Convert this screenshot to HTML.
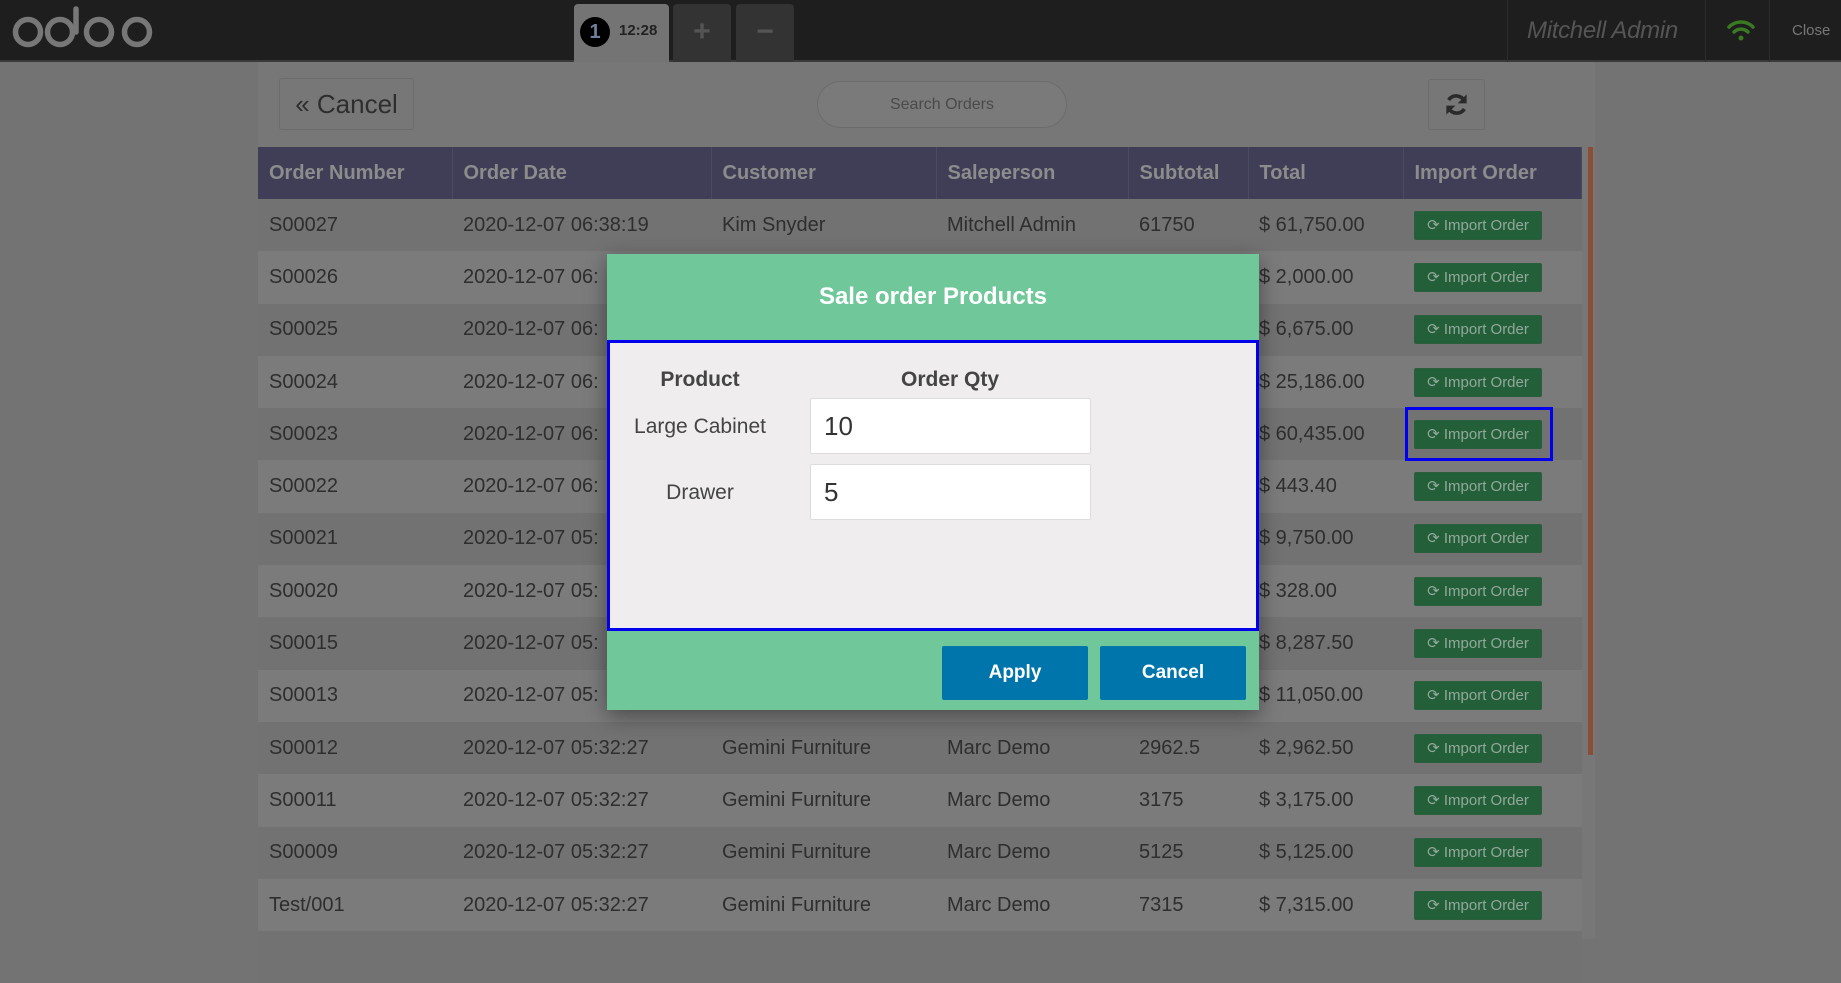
<!DOCTYPE html>
<html><head><meta charset="utf-8"><style>
*{box-sizing:border-box;margin:0;padding:0}
body{width:1841px;height:939px;overflow:hidden;background:#737373;font-family:"Liberation Sans",sans-serif;position:relative}
.abs{position:absolute}
.top{left:0;top:0;width:1841px;height:62px;background:#1e1e1e;border-bottom:2px solid #3a3a3a}
.panel{left:258px;top:62px;width:1337px;height:877px;background:#777}
table{position:absolute;left:258px;top:147px;width:1324px;border-collapse:collapse;font-size:20px;color:#2e2e2e}
th{height:52px;background:#3f3e56;color:#8c8c8c;text-align:left;font-weight:bold;padding-left:11px;border-right:1px solid #4a4a62;font-size:20px}
td{height:52.3px;padding-left:11px;white-space:nowrap}
tr:nth-child(odd) td{background:#7b7b7b}
tr:nth-child(even) td{background:#727272}
.ib{display:inline-block;background:#236039;color:#93a89a;font-size:15px;width:128px;height:29px;line-height:27px;text-align:center;border-radius:2px;border:1px solid #2b5e3c;vertical-align:middle}
</style></head><body>
<div class="abs top"></div>
<svg class="abs" style="left:0;top:0" width="170" height="62"><g fill="none" stroke="#777" stroke-width="5.5"><circle cx="28" cy="32" r="12.5"/><circle cx="60" cy="32" r="12.5"/><circle cx="99" cy="32" r="12.5"/><circle cx="137" cy="32" r="12.5"/></g><line x1="76" y1="9" x2="76" y2="32" stroke="#777" stroke-width="5.5" stroke-linecap="round"/></svg>
<div class="abs" style="left:574px;top:4px;width:95px;height:58px;background:#747474;border-radius:4px 4px 0 0"></div>
<div class="abs" style="left:580px;top:17px;width:30px;height:30px;border-radius:50%;background:#000;color:#6d7f99;font-weight:bold;font-size:20px;text-align:center;line-height:30px">1</div>
<div class="abs" style="left:619px;top:22px;font-size:15px;font-weight:bold;color:#222">12:28</div>
<div class="abs" style="left:673px;top:4px;width:58px;height:58px;background:#333;border-radius:4px 4px 0 0;color:#555;font-size:30px;font-weight:bold;text-align:center;line-height:56px">+</div>
<div class="abs" style="left:736px;top:4px;width:58px;height:58px;background:#333;border-radius:4px 4px 0 0;color:#555;font-size:30px;font-weight:bold;text-align:center;line-height:56px">−</div>
<div class="abs" style="left:1507px;top:0;width:1px;height:62px;background:#2c2c2c"></div>
<div class="abs" style="left:1705px;top:0;width:1px;height:62px;background:#2c2c2c"></div>
<div class="abs" style="left:1769px;top:0;width:1px;height:62px;background:#2c2c2c"></div>
<div class="abs" style="left:1527px;top:17px;font-size:24px;font-style:italic;color:#555;letter-spacing:-0.3px">Mitchell Admin</div>
<svg class="abs" style="left:1726px;top:18px" width="30" height="24"><g fill="none" stroke="#3a7a22" stroke-width="3.5" stroke-linecap="round"><path d="M3 9 A17 17 0 0 1 27 9"/><path d="M8 14 A10 10 0 0 1 22 14"/></g><circle cx="15" cy="20" r="2.5" fill="#3a7a22"/></svg>
<div class="abs" style="left:1792px;top:22px;font-size:15px;color:#777">Close</div>
<div class="abs panel"></div>
<div class="abs" style="left:279px;top:78px;width:135px;height:52px;border:1px solid #6c6c6c;border-radius:3px;background:#777;color:#2e2e2e;font-size:26px;text-align:center;line-height:50px">« Cancel</div>
<div class="abs" style="left:817px;top:81px;width:250px;height:47px;border:1px solid #6c6c6c;border-radius:24px;background:#7a7a7a;color:#4a4a4a;font-size:16px;text-align:center;line-height:45px">Search Orders</div>
<div class="abs" style="left:1428px;top:79px;width:57px;height:51px;border:1px solid #6c6c6c;border-radius:3px;background:#777"></div>
<svg class="abs" style="left:1443px;top:91px" width="27" height="27" viewBox="0 0 24 24"><g fill="none" stroke="#2a2a2a" stroke-width="3.2"><path d="M19 9 A8 8 0 0 0 5 8"/><path d="M5 15 A8 8 0 0 0 19 16"/></g><path d="M21 3 L21 11 L13 11 Z" fill="#2a2a2a"/><path d="M3 21 L3 13 L11 13 Z" fill="#2a2a2a"/></svg>
<table>
<colgroup><col style="width:194px"><col style="width:259px"><col style="width:225px"><col style="width:192px"><col style="width:120px"><col style="width:155px"><col></colgroup>
<tr><th>Order Number</th><th>Order Date</th><th>Customer</th><th>Saleperson</th><th>Subtotal</th><th>Total</th><th>Import Order</th></tr>
<tr><td>S00027</td><td>2020-12-07 06:38:19</td><td>Kim Snyder</td><td>Mitchell Admin</td><td>61750</td><td>$ 61,750.00</td><td><span class="ib">⟳ Import Order</span></td></tr>
<tr><td>S00026</td><td>2020-12-07 06:</td><td></td><td></td><td></td><td>$ 2,000.00</td><td><span class="ib">⟳ Import Order</span></td></tr>
<tr><td>S00025</td><td>2020-12-07 06:</td><td></td><td></td><td></td><td>$ 6,675.00</td><td><span class="ib">⟳ Import Order</span></td></tr>
<tr><td>S00024</td><td>2020-12-07 06:</td><td></td><td></td><td></td><td>$ 25,186.00</td><td><span class="ib">⟳ Import Order</span></td></tr>
<tr><td>S00023</td><td>2020-12-07 06:</td><td></td><td></td><td></td><td>$ 60,435.00</td><td><span class="ib">⟳ Import Order</span></td></tr>
<tr><td>S00022</td><td>2020-12-07 06:</td><td></td><td></td><td></td><td>$ 443.40</td><td><span class="ib">⟳ Import Order</span></td></tr>
<tr><td>S00021</td><td>2020-12-07 05:</td><td></td><td></td><td></td><td>$ 9,750.00</td><td><span class="ib">⟳ Import Order</span></td></tr>
<tr><td>S00020</td><td>2020-12-07 05:</td><td></td><td></td><td></td><td>$ 328.00</td><td><span class="ib">⟳ Import Order</span></td></tr>
<tr><td>S00015</td><td>2020-12-07 05:</td><td></td><td></td><td></td><td>$ 8,287.50</td><td><span class="ib">⟳ Import Order</span></td></tr>
<tr><td>S00013</td><td>2020-12-07 05:</td><td></td><td></td><td></td><td>$ 11,050.00</td><td><span class="ib">⟳ Import Order</span></td></tr>
<tr><td>S00012</td><td>2020-12-07 05:32:27</td><td>Gemini Furniture</td><td>Marc Demo</td><td>2962.5</td><td>$ 2,962.50</td><td><span class="ib">⟳ Import Order</span></td></tr>
<tr><td>S00011</td><td>2020-12-07 05:32:27</td><td>Gemini Furniture</td><td>Marc Demo</td><td>3175</td><td>$ 3,175.00</td><td><span class="ib">⟳ Import Order</span></td></tr>
<tr><td>S00009</td><td>2020-12-07 05:32:27</td><td>Gemini Furniture</td><td>Marc Demo</td><td>5125</td><td>$ 5,125.00</td><td><span class="ib">⟳ Import Order</span></td></tr>
<tr><td>Test/001</td><td>2020-12-07 05:32:27</td><td>Gemini Furniture</td><td>Marc Demo</td><td>7315</td><td>$ 7,315.00</td><td><span class="ib">⟳ Import Order</span></td></tr>
<tr><td></td><td></td><td></td><td></td><td></td><td></td><td></td></tr>
</table>
<div class="abs" style="left:1588px;top:147px;width:5px;height:608px;background:#8a4e35"></div>
<div class="abs" style="left:1405px;top:407px;width:148px;height:54px;border:3px solid #0000ee"></div>
<div class="abs" style="left:607px;top:254px;width:652px;height:456px;background:#6fc79a;box-shadow:0 6px 20px rgba(0,0,0,.4)"></div>
<div class="abs" style="left:607px;top:283px;width:652px;text-align:center;color:#fff;font-weight:bold;font-size:24px">Sale order Products</div>
<div class="abs" style="left:607px;top:340px;width:652px;height:291px;background:#efedee;border:3px solid #0000ee"></div>
<div class="abs" style="left:600px;top:368px;width:200px;text-align:center;font-weight:bold;font-size:21px;color:#444">Product</div>
<div class="abs" style="left:850px;top:368px;width:200px;text-align:center;font-weight:bold;font-size:21px;color:#444">Order Qty</div>
<div class="abs" style="left:600px;top:415px;width:200px;text-align:center;font-size:21px;color:#444">Large Cabinet</div>
<div class="abs" style="left:600px;top:481px;width:200px;text-align:center;font-size:21px;color:#444">Drawer</div>
<div class="abs" style="left:810px;top:398px;width:281px;height:56px;background:#fff;border:1px solid #ddd;border-radius:2px;font-size:26px;color:#333;padding-left:13px;line-height:54px">10</div>
<div class="abs" style="left:810px;top:464px;width:281px;height:56px;background:#fff;border:1px solid #ddd;border-radius:2px;font-size:26px;color:#333;padding-left:13px;line-height:54px">5</div>
<div class="abs" style="left:942px;top:646px;width:146px;height:54px;background:#0075ab;color:#fff;font-weight:bold;font-size:19px;text-align:center;line-height:54px;border-radius:2px">Apply</div>
<div class="abs" style="left:1100px;top:646px;width:146px;height:54px;background:#0075ab;color:#fff;font-weight:bold;font-size:19px;text-align:center;line-height:54px;border-radius:2px">Cancel</div>
</body></html>
